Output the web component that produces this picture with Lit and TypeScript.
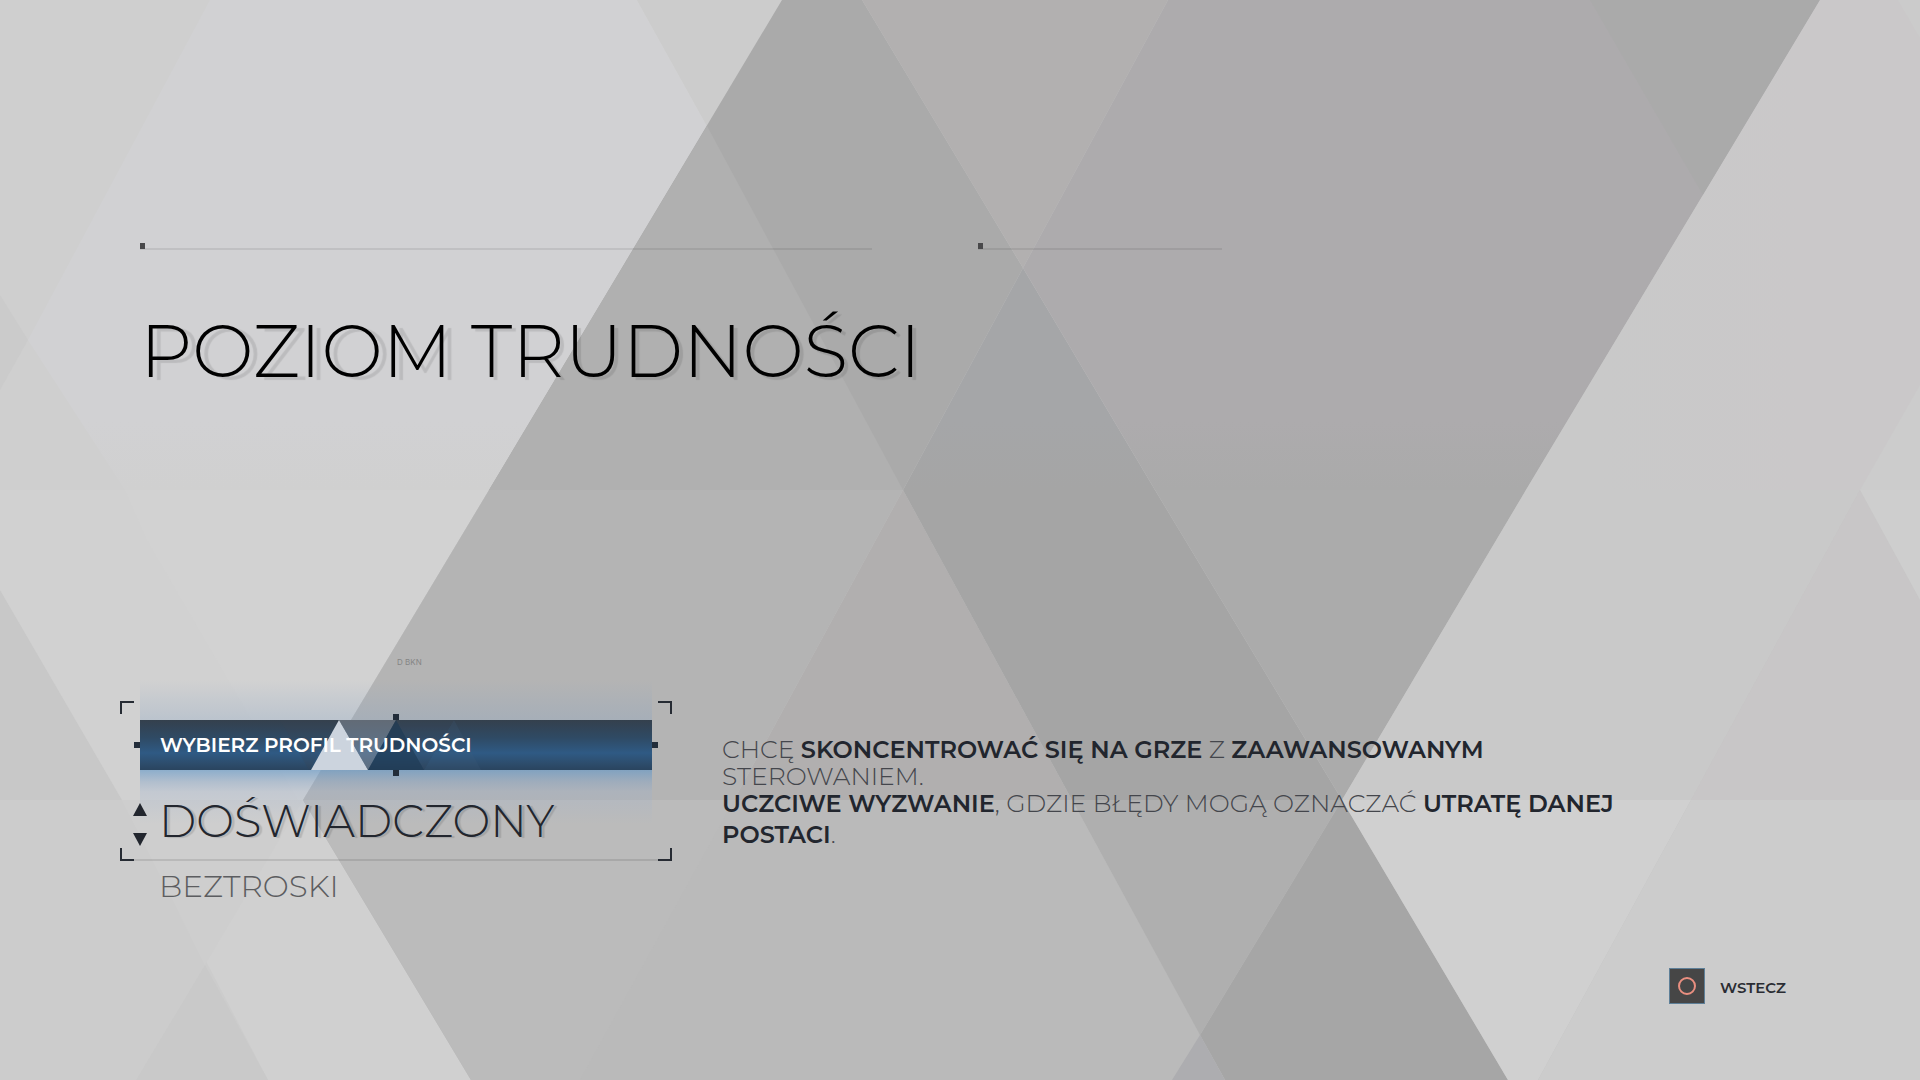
import { LitElement, html, css, svg } from "lit";
import { customElement, property, state } from "lit/decorators.js";

/* Facets of the backdrop: polygon points on a 1920x1080 canvas and a fill. */
const FACETS: [string, string][] = [
  // upper band, left
  ["0,0 782,0 489,490 0,490", "#cfcfcf"],
  ["210,0 637,0 707,126 489,490 125,490 28,340", "url(#lilac)"],
  ["637,0 782,0 707,126", "#cccccc"],
  ["0,295 28,340 0,390", "#cbcbcb"],
  // upper band, middle
  ["782,0 862,0 1023,268 903,490 489,490", "#aaaaaa"],
  ["707,126 903,490 489,490", "#b0b0b0"],
  ["862,0 1168,0 1023,268", "#b2b0b0"],
  ["1023,268 1155,490 903,490", "url(#slate)"],
  ["1168,0 1820,0 1526,490 1155,490 1023,268", "url(#mauve)"],
  ["1590,0 1820,0 1703,195", "#aaaaaa"],
  // upper band, right
  ["1820,0 1920,0 1920,490 1526,490", "url(#rose)"],
  ["1898,0 1920,0 1920,38", "#cbcbcb"],
  ["1920,385 1860,490 1920,490", "#cccccc"],
  // middle band
  ["0,490 489,490 303,800 0,800", "#d2d2d2"],
  ["0,490 125,490 147,540 240,700 298,800 122,800 0,590", "#d1d1d1"],
  ["0,590 122,800 0,800", "#c8c8c8"],
  ["489,490 903,490 734,800 303,800", "#b4b4b4"],
  ["903,490 1072,800 734,800", "#b1afaf"],
  ["903,490 1155,490 1342,800 1072,800", "#a5a5a5"],
  ["1155,490 1526,490 1342,800", "#ababab"],
  ["1526,490 1860,490 1691,800 1342,800", "#c9c9c9"],
  ["1860,490 1920,600 1920,800 1691,800", "#c8c6c7"],
  ["1860,490 1920,490 1920,600", "#cecece"],
  // lower band
  ["0,800 303,800 471,1080 0,1080", "#cccccc"],
  ["122,800 303,800 471,1080 268,1080", "#d0d0d0"],
  ["303,800 205,965 122,800", "#cecece"],
  ["205,965 268,1080 136,1080", "#c9c9c9"],
  ["303,800 1072,800 1225,1080 471,1080", "#bababa"],
  ["303,800 734,800 580,1080 471,1080", "#bbbbbb"],
  ["1072,800 1342,800 1200,1035", "#afafaf"],
  ["1342,800 1508,1080 1225,1080 1200,1035", "#a6a6a6"],
  ["1200,1035 1225,1080 1172,1080", "#adadb0"],
  ["1342,800 1691,800 1538,1080 1508,1080", "#d0d0d0"],
  ["1691,800 1920,800 1920,1080 1538,1080", "#cccccc"],
];

const fade = (id: string, top: string, bottom: string) => svg`
  <linearGradient id=${id} x1="0" y1="0" x2="0" y2="490" gradientUnits="userSpaceOnUse">
    <stop offset="0.86" stop-color=${top}></stop>
    <stop offset="1" stop-color=${bottom}></stop>
  </linearGradient>`;

@customElement("facet-backdrop")
export class FacetBackdrop extends LitElement {
  static styles = css`
    :host { display: block; }
    svg { display: block; width: 100%; height: 100%; }
  `;

  render() {
    return html`
      <svg viewBox="0 0 1920 1080" preserveAspectRatio="xMidYMid slice" aria-hidden="true">
        <defs>
          ${fade("lilac", "#d1d1d3", "#d0d0d0")}
          ${fade("mauve", "#adabad", "#aaaaaa")}
          ${fade("slate", "#a5a6a8", "#a5a5a5")}
          <linearGradient id="rose" x1="1600" y1="280" x2="1800" y2="280" gradientUnits="userSpaceOnUse">
            <stop offset="0" stop-color="#c9c9c9"></stop>
            <stop offset="1" stop-color="#cac8c9"></stop>
          </linearGradient>
        </defs>
        ${FACETS.map(([points, fill]) => svg`<polygon points=${points} fill=${fill}></polygon>`)}
      </svg>
    `;
  }
}

@customElement("profile-picker")
export class ProfilePicker extends LitElement {
  @property({ type: Array }) profiles: string[] = [];
  @state() private index = 0;

  static styles = css`
    :host { display: block; }
    button {
      display: block;
      border: 0;
      padding: 0;
      background: none;
      font: inherit;
      color: inherit;
      cursor: pointer;
    }
    .tag {
      margin: 0 0 34px 277px;
      font-family: Inter, sans-serif;
      font-size: 8px;
      line-height: 10px;
      color: #858585;
    }
    .frame { position: relative; padding: 19px 0 15px; }
    .corner {
      position: absolute;
      width: 12px;
      height: 11px;
      border: 0 solid #262b33;
    }
    .tl { top: 0; left: 0; border-width: 2px 0 0 2px; }
    .tr { top: 0; right: 0; border-width: 2px 2px 0 0; }
    .bl { bottom: 0; left: 0; border-width: 0 0 2px 2px; }
    .br { bottom: 0; right: 0; border-width: 0 2px 2px 0; }
    .rule {
      position: absolute;
      left: 14px;
      right: 14px;
      bottom: 0;
      height: 2px;
      background: rgba(0, 0, 0, 0.1);
    }
    .bar {
      position: relative;
      display: flex;
      align-items: center;
      height: 50px;
      margin: 0 20px;
      background: linear-gradient(#34404d, #2f4a64 35%, #2f5a84 66%, #2d4c6b 88%, #2a445f);
    }
    .glow {
      position: absolute;
      left: 0;
      right: 0;
      pointer-events: none;
    }
    .above {
      bottom: 100%;
      height: 40px;
      background: linear-gradient(rgba(150, 175, 205, 0), rgba(130, 160, 195, 0.28));
    }
    .below {
      top: 100%;
      height: 54px;
      background: linear-gradient(
        rgba(95, 150, 200, 0.6),
        rgba(125, 160, 200, 0.38) 22%,
        rgba(150, 175, 210, 0.24) 40%,
        rgba(150, 175, 210, 0)
      );
    }
    .shards { position: absolute; left: 140px; top: 0; }
    .handle { position: absolute; width: 6px; height: 6px; background: #222d3a; }
    .west { right: 100%; top: 22px; }
    .east { left: 100%; top: 22px; }
    .north { bottom: 100%; left: 253px; }
    .south { top: 100%; left: 253px; }
    .caption {
      position: relative;
      margin: 0;
      padding-left: 20px;
      font-size: 20px;
      font-weight: 600;
      color: #ffffff;
    }
    .row {
      position: relative;
      display: flex;
      align-items: flex-end;
      gap: 12px;
      margin: 26px 0 0 13px;
    }
    .arrows { display: flex; flex-direction: column; gap: 17px; }
    .arrows svg { display: block; width: 14px; height: 13px; fill: #22262e; }
    .current {
      margin: 0;
      font-size: 45px;
      line-height: 50px;
      font-weight: 300;
      text-shadow: 3px 1px 1px rgba(0, 0, 0, 0.13);
    }
    .next {
      margin: 5px 0 0 39px;
      font-size: 31px;
      line-height: 40px;
      font-weight: 300;
      color: #5c5d60;
    }
  `;

  private step(by: number) {
    const n = this.profiles.length;
    this.index = (this.index + by + n) % n;
  }

  render() {
    const next = this.profiles[(this.index + 1) % this.profiles.length];
    return html`
      <p class="tag">D BKN</p>
      <div class="frame">
        <div class="bar">
          <span class="glow above"></span>
          <span class="glow below"></span>
          <svg class="shards" width="210" height="50" viewBox="0 0 210 50" aria-hidden="true">
            <polygon points="0,0 59,0 29,50" fill="#3c4650" opacity="0.22"></polygon>
            <polygon points="59,0 31,50 88,50" fill="#ccd4de"></polygon>
            <polygon points="59,0 116,0 88,50" fill="#8f959f" opacity="0.5"></polygon>
            <polygon points="116,0 88,50 144,50" fill="#1f3a54" opacity="0.7"></polygon>
            <polygon points="116,0 174,0 144,50" fill="#3c4a5a" opacity="0.18"></polygon>
            <polygon points="174,0 144,50 201,50" fill="#3f5f7f" opacity="0.2"></polygon>
          </svg>
          <span class="handle west"></span>
          <span class="handle east"></span>
          <span class="handle north"></span>
          <span class="handle south"></span>
          <h2 class="caption">WYBIERZ PROFIL TRUDNOŚCI</h2>
        </div>
        <div class="row">
          <div class="arrows">
            <button aria-label="Poprzedni profil" @click=${() => this.step(-1)}>
              <svg viewBox="0 0 14 13"><polygon points="7,0 14,13 0,13"></polygon></svg>
            </button>
            <button aria-label="Następny profil" @click=${() => this.step(1)}>
              <svg viewBox="0 0 14 13"><polygon points="0,0 14,0 7,13"></polygon></svg>
            </button>
          </div>
          <p class="current" aria-live="polite">${this.profiles[this.index]}</p>
        </div>
        <span class="rule"></span>
        <span class="corner tl"></span>
        <span class="corner tr"></span>
        <span class="corner bl"></span>
        <span class="corner br"></span>
      </div>
      <button class="next" @click=${() => this.step(1)}>${next}</button>
    `;
  }
}

@customElement("app-root")
export class AppRoot extends LitElement {
  static styles = css`
    :host {
      display: block;
      position: relative;
      min-height: 100vh;
      font-family: Montserrat, Inter, "Open Sans", sans-serif;
      color: #22262e;
      background: #c4c4c4;
    }
    facet-backdrop { position: absolute; inset: 0; }
    main {
      position: relative;
      box-sizing: border-box;
      display: flex;
      flex-direction: column;
      min-height: 100vh;
      padding: 243px 134px 76px 140px;
    }
    .rules { display: grid; grid-template-columns: 732px 244px; gap: 106px; }
    .line {
      display: flex;
      height: 5px;
      border-bottom: 2px solid rgba(0, 0, 0, 0.08);
    }
    .line::before { content: ""; width: 5px; height: 6px; background: #48484a; }
    h1 {
      margin: 61px 0 0;
      font-size: 73px;
      line-height: 80px;
      font-weight: 300;
      color: #000000;
    }
    .far { text-shadow: 8px 3px 1px rgba(0, 0, 0, 0.1); }
    .near { text-shadow: 4px 3px 1px rgba(0, 0, 0, 0.1); }
    .choice {
      display: flex;
      align-items: flex-start;
      gap: 50px;
      margin: 266px 0 0 -20px;
    }
    profile-picker { flex: none; width: 552px; }
    .about {
      flex: 1;
      max-width: 920px;
      padding-top: 79px;
      font-size: 25px;
      font-weight: 300;
      color: #44464c;
    }
    .about p { margin: 0; line-height: 27px; }
    .about .second { margin-top: -2px; line-height: 31px; }
    strong { font-size: 24px; font-weight: 600; color: #22262e; }
    footer { display: flex; justify-content: flex-end; margin-top: auto; }
    .back {
      display: flex;
      align-items: center;
      gap: 15px;
      border: 0;
      padding: 0;
      background: none;
      font: 600 15px/18px Montserrat, Inter, sans-serif;
      color: #2a2c33;
      cursor: pointer;
    }
    .back svg { display: block; }
    .back span { padding-top: 4px; }
  `;

  render() {
    return html`
      <facet-backdrop></facet-backdrop>
      <main>
        <div class="rules">
          <span class="line"></span>
          <span class="line"></span>
        </div>
        <h1><span class="far">POZIOM</span> <span class="near">TRUDNOŚCI</span></h1>
        <section class="choice">
          <profile-picker .profiles=${["DOŚWIADCZONY", "BEZTROSKI"]}></profile-picker>
          <div class="about">
            <p>
              CHCĘ <strong>SKONCENTROWAĆ SIĘ NA GRZE</strong> Z
              <strong>ZAAWANSOWANYM</strong> STEROWANIEM.
            </p>
            <p class="second">
              <strong>UCZCIWE WYZWANIE</strong>, GDZIE BŁĘDY MOGĄ OZNACZAĆ
              <strong>UTRATĘ DANEJ POSTACI</strong>.
            </p>
          </div>
        </section>
        <footer>
          <button class="back">
            <svg width="36" height="36" viewBox="0 0 36 36" aria-hidden="true">
              <rect x="0.5" y="0.5" width="35" height="35" fill="#464646" stroke="#5d7f98"></rect>
              <circle cx="18" cy="18" r="8" fill="none" stroke="#e98f80" stroke-width="2"></circle>
            </svg>
            <span>WSTECZ</span>
          </button>
        </footer>
      </main>
    `;
  }
}
